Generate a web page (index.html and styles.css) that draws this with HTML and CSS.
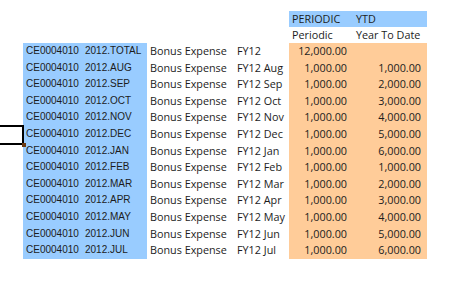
FILE: index.html
```html
<!DOCTYPE html>
<html lang="en">
<head>
    <meta charset="UTF-8">
    <title>Bonus Expense</title>
    <link rel="stylesheet" href="styles.css">
</head>
<body>
    <div class="sheet">
        <div class="selected-cell"></div>

        <div class="grid">
            <!-- header rows -->
            <div class="cell head-row span-left"></div>
            <div class="cell head-row blue">PERIODIC</div>
            <div class="cell head-row blue">YTD</div>

            <div class="cell head-row span-left"></div>
            <div class="cell head-row">Periodic</div>
            <div class="cell head-row">Year To Date</div>
        </div>

        <div class="grid" id="rows">
            <!-- filled by script -->
        </div>
    </div>

    <script>
        // data rows
        const rows = [
            ['2012.TOTAL', 'FY12', '12,000.00', ''],
            ['2012.AUG', 'FY12 Aug', '1,000.00', '1,000.00'],
            ['2012.SEP', 'FY12 Sep', '1,000.00', '2,000.00'],
            ['2012.OCT', 'FY12 Oct', '1,000.00', '3,000.00'],
            ['2012.NOV', 'FY12 Nov', '1,000.00', '4,000.00'],
            ['2012.DEC', 'FY12 Dec', '1,000.00', '5,000.00'],
            ['2012.JAN', 'FY12 Jan', '1,000.00', '6,000.00'],
            ['2012.FEB', 'FY12 Feb', '1,000.00', '1,000.00'],
            ['2012.MAR', 'FY12 Mar', '1,000.00', '2,000.00'],
            ['2012.APR', 'FY12 Apr', '1,000.00', '3,000.00'],
            ['2012.MAY', 'FY12 May', '1,000.00', '4,000.00'],
            ['2012.JUN', 'FY12 Jun', '1,000.00', '5,000.00'],
            ['2012.JUL', 'FY12 Jul', '1,000.00', '6,000.00']
        ];

        const container = document.getElementById('rows');
        let html = '';
        rows.forEach(r => {
            html += `
                <div class="cell blue code">CE0004010</div>
                <div class="cell blue code">${r[0]}</div>
                <div class="cell">Bonus Expense</div>
                <div class="cell">${r[1]}</div>
                <div class="cell orange num">${r[2]}</div>
                <div class="cell orange num">${r[3]}</div>
            `;
        });
        container.innerHTML = html;
    </script>
</body>
</html>
```

FILE: styles.css
```css
body {
    margin: 0;
    background: #fff;
    font-family: 'Open Sans', 'Liberation Sans', sans-serif;
    font-size: 10.8px;
    color: #1c1c1c;
}
.sheet {
    position: relative;
    width: 459px;
    height: 307px;
    padding-top: 11px;
    padding-left: 23px;
    box-sizing: border-box;
}
.grid {
    display: grid;
    grid-template-columns: 59px 65px 87px 55px 64px 74px;
}
.cell {
    height: 16.6px;
    line-height: 16.6px;
    padding-left: 3px;
    white-space: nowrap;
    overflow: hidden;
}
.head-row {
    height: 16px;
    line-height: 16px;
}
.span-left {
    grid-column: 1 / 5;
}
.blue {
    background: #99ccff;
}
.code {
    font-family: 'Liberation Sans', Arial, sans-serif;
    font-size: 10px;
}
.orange {
    background: #ffcc99;
}
.num {
    text-align: right;
    padding-left: 0;
    padding-right: 6px;
}
.selected-cell {
    position: absolute;
    left: -2px;
    top: 125px;
    width: 22px;
    height: 16px;
    border: 2px solid #000;
}
.selected-cell::after {
    content: "";
    position: absolute;
    right: -4px;
    bottom: -4px;
    width: 4px;
    height: 4px;
    background: #6b3a12;
}
```
